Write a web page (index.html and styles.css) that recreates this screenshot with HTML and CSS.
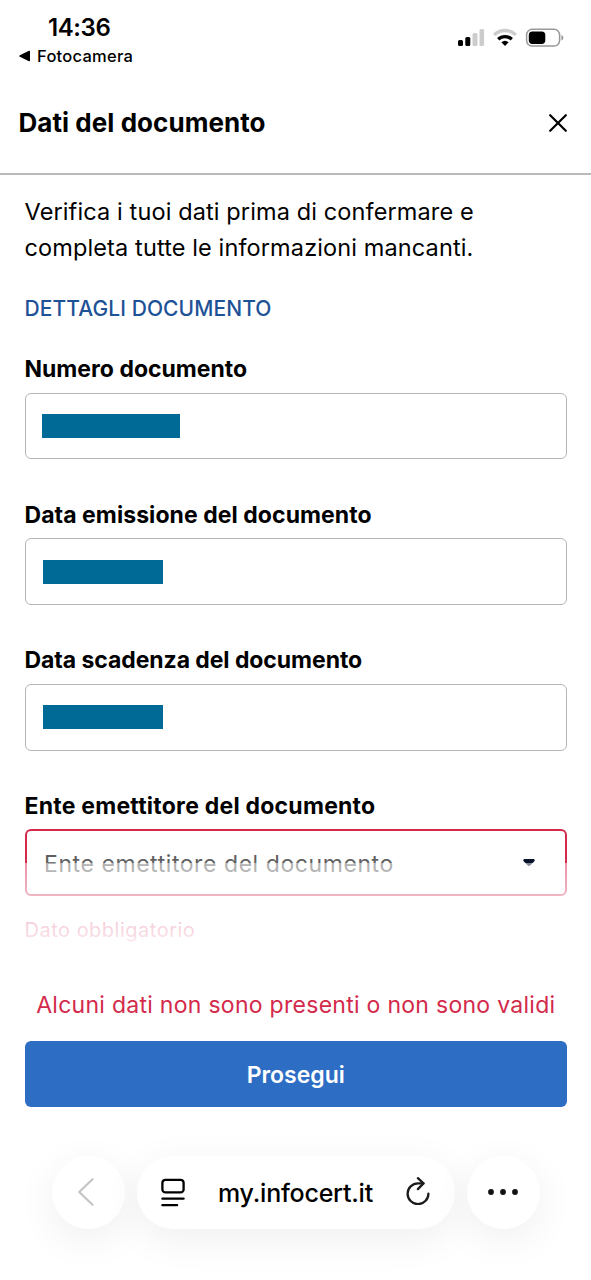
FILE: index.html
```html
<!DOCTYPE html>
<html lang="it">
<head>
<meta charset="utf-8">
<title>Dati del documento</title>
<link rel="stylesheet" href="styles.css">
</head>
<body>
<div class="status">
  <div class="status-left">
    <div class="clock"><span>14:36</span></div>
    <div class="back-app">
      <svg width="12" height="12" viewBox="0 0 12 12"><path d="M.8 5.2 10 .8q1-.4 1 .7v9q0 1.100-1 .7L.8 6.800Q-.3 6 .8 5.200z"/></svg>
      <span>Fotocamera</span>
    </div>
  </div>
  <svg class="status-icons" width="108" height="20" viewBox="0 0 108 20">
    <rect x="0" y="12" width="5" height="6" rx="1.500"/>
    <rect x="7.300" y="9" width="5" height="9" rx="1.500"/>
    <rect x="14.500" y="5" width="5" height="13" rx="1.500" fill="#ccc"/>
    <rect x="21.500" y="1" width="4.600" height="17" rx="1.500" fill="#ccc"/>
    <g fill="none" stroke-width="3.300">
      <path d="M36.200 6.900a15.500 15.500 0 0 1 21.600 0" stroke="#ccc"/>
      <path d="M40.200 11.300a9.800 9.800 0 0 1 13.600 0" stroke="#000"/>
    </g>
    <path d="M43.400 14.300q3.600-3 7.200 0L47 18z"/>
    <rect x="68.600" y="1.300" width="33" height="16.800" rx="5.500" fill="none" stroke="#999" stroke-width="1.500"/>
    <rect x="70.800" y="3.500" width="16.500" height="12.400" rx="3.600"/>
    <path d="M103.400 7q2 .7 2 2.700t-2 2.700z" fill="#999"/>
  </svg>
</div>
<header class="header">
  <h1 class="title"><span>Dati del documento</span></h1>
  <svg width="18" height="18" viewBox="0 0 18 18"><path d="M1.200 1.200l15.600 15.600M16.800 1.200L1.200 16.800" fill="none" stroke="#000" stroke-width="2.200" stroke-linecap="round"/></svg>
</header>
<main class="content">
  <p class="intro">Verifica i tuoi dati prima di confermare e<br>completa tutte le informazioni mancanti.</p>
  <h2 class="section">DETTAGLI DOCUMENTO</h2>
  <div class="field">
    <label class="label">Numero documento</label>
    <div class="box"><div class="mask mask-wide"></div></div>
  </div>
  <div class="field">
    <label class="label label-issue">Data emissione del documento</label>
    <div class="box"><div class="mask"></div></div>
  </div>
  <div class="field">
    <label class="label label-expiry">Data scadenza del documento</label>
    <div class="box"><div class="mask"></div></div>
  </div>
  <div class="field">
    <label class="label label-issuer">Ente emettitore del documento</label>
    <div class="box box-invalid">
      <span class="placeholder">Ente emettitore del documento</span>
      <svg width="12" height="8" viewBox="0 0 12 8"><path d="M1.200 0h9.600q1.500.8.500 2.200L7.400 6.300q-1.400 1.200-2.800 0L.7 2.200Q-.3.800 1.200 0z" fill="#06132b"/></svg>
    </div>
    <div class="error">Dato obbligatorio</div>
    <div class="fade"></div>
  </div>
</main>
<footer class="actions">
  <p class="alert">Alcuni dati non sono presenti o non sono validi</p>
  <button class="submit">Prosegui</button>
</footer>
<nav class="browser">
  <div class="pill round back">
    <svg width="16" height="28" viewBox="0 0 16 28"><path d="M14.500 1.200L1.200 14l13.300 12.800" fill="none" stroke="#c4c4c4" stroke-width="2.200" stroke-linecap="round" stroke-linejoin="round"/></svg>
  </div>
  <div class="pill address">
    <svg width="24" height="29" viewBox="0 0 24 29"><g fill="none" stroke="#000" stroke-width="2.300" stroke-linecap="round"><rect x="1.400" y="1.800" width="21.200" height="12.600" rx="3"/><path d="M1.400 20.700h21.200M1.400 27.200h14.700"/></g></svg>
    <span class="host">my.infocert.it</span>
    <svg class="reload" width="24" height="28" viewBox="0 0 24 28"><g fill="none" stroke="#1c1c1e" stroke-width="2.300" stroke-linecap="round" stroke-linejoin="round"><path d="M17.400 6.300H12A10.400 10.400 0 1 0 22.400 16.700"/><path d="M11.900 1.200l5.600 5.200-5.600 5.700"/></g></svg>
  </div>
  <div class="pill round">
    <svg width="30" height="6" viewBox="0 0 30 6" fill="#111"><circle cx="3" cy="3" r="2.900"/><circle cx="15" cy="3" r="2.900"/><circle cx="27" cy="3" r="2.900"/></svg>
  </div>
</nav>
</body>
</html>
```
FILE: styles.css
```css
* { box-sizing: border-box; }
body {
  margin: 0;
  height: 1280px;
  overflow: hidden;
  background: #fff;
  color: #000;
  font-family: Inter, "Liberation Sans", sans-serif;
}
svg { display: block; flex: none; }
h1, h2, p { margin: 0; }

.status {
  display: flex;
  justify-content: space-between;
  height: 72px;
  padding: 12px 25px 0 19px;
}
.clock {
  padding-left: 29px;
  font-size: 24px;
  font-weight: 600;
  line-height: 31px;
  letter-spacing: -0.4px;
}
.back-app {
  display: flex;
  align-items: center;
  gap: 6px;
  margin-top: 2px;
  font-size: 16.500px;
  font-weight: 500;
  line-height: 22px;
  letter-spacing: 0.25px;
}
.status-icons { margin-top: 16px; }

.header {
  display: flex;
  align-items: center;
  justify-content: space-between;
  height: 103px;
  padding: 0 24px 0 18.500px;
  border-bottom: 2px solid #bababa;
}
.title { font-size: 26px; font-weight: 700; letter-spacing: 0.05px; }

.content { padding: 19px 24px 0 24.500px; }
.intro {
  font-size: 23.500px;
  font-weight: 400;
  line-height: 36px;
  letter-spacing: 0.12px;
  white-space: nowrap;
}
.section {
  margin-top: 27px;
  color: #1e5297;
  font-size: 21px;
  font-weight: 500;
  line-height: 31px;
  letter-spacing: 0.08px;
}
.section + .field { margin-top: 30px; }
.field { position: relative; height: 145.700px; }
.label {
  display: block;
  font-size: 23px;
  font-weight: 700;
  line-height: 31px;
}
.label-issue { letter-spacing: 0.06px; }
.label-expiry { letter-spacing: -0.07px; }
.label-issuer { letter-spacing: 0.23px; }
.box {
  display: flex;
  align-items: center;
  height: 66.500px;
  margin-top: 7.800px;
  padding-left: 16.500px;
  border: 1.500px solid #b5b5b5;
  border-radius: 6px;
}
.mask { width: 120px; height: 24px; margin-left: 1px; background: #006a97; }
.mask-wide { width: 138px; margin-left: 0; }
.box-invalid {
  justify-content: space-between;
  margin-top: 7.300px;
  padding: 0 30px 0 17.500px;
  border: 2px solid #d32a4b;
}
.placeholder {
  padding-top: 2px;
  color: #606060;
  font-size: 23px;
  font-weight: 400;
  line-height: 30px;
  letter-spacing: 0.57px;
}
.error {
  margin-top: 20px;
  color: #d3265a;
  font-size: 20px;
  font-weight: 400;
  line-height: 28px;
  letter-spacing: 0.5px;
}
.fade {
  position: absolute;
  inset: 72px -24px -24px;
  background: linear-gradient(rgba(255,255,255,.5), rgba(255,255,255,.82) 70%, #fff);
}

.actions { padding: 50px 24px 0 24.500px; }
.alert {
  color: #d32a4b;
  font-size: 23px;
  font-weight: 400;
  line-height: 36px;
  letter-spacing: 0.28px;
  text-align: center;
  white-space: nowrap;
}
.submit {
  display: block;
  width: 100%;
  height: 66px;
  margin-top: 18px;
  padding: 2px 0 0;
  border: 0;
  border-radius: 6px;
  background: #2d6dc4;
  color: #fff;
  font: 600 23px Inter, sans-serif;
}

.browser {
  display: flex;
  justify-content: center;
  gap: 12px;
  padding-top: 49px;
}
.pill {
  display: flex;
  align-items: center;
  height: 73px;
  border-radius: 37px;
  background: #fff;
  box-shadow: 0 10px 40px rgba(0,0,0,.065);
}
.round { justify-content: center; width: 73px; }
.back { padding-right: 4px; }
.address { justify-content: space-between; width: 318px; padding: 0 24px; }
.host { padding-top: 2px; font-size: 25px; font-weight: 500; letter-spacing: -0.22px; }
.reload { margin-bottom: 2px; }
```
